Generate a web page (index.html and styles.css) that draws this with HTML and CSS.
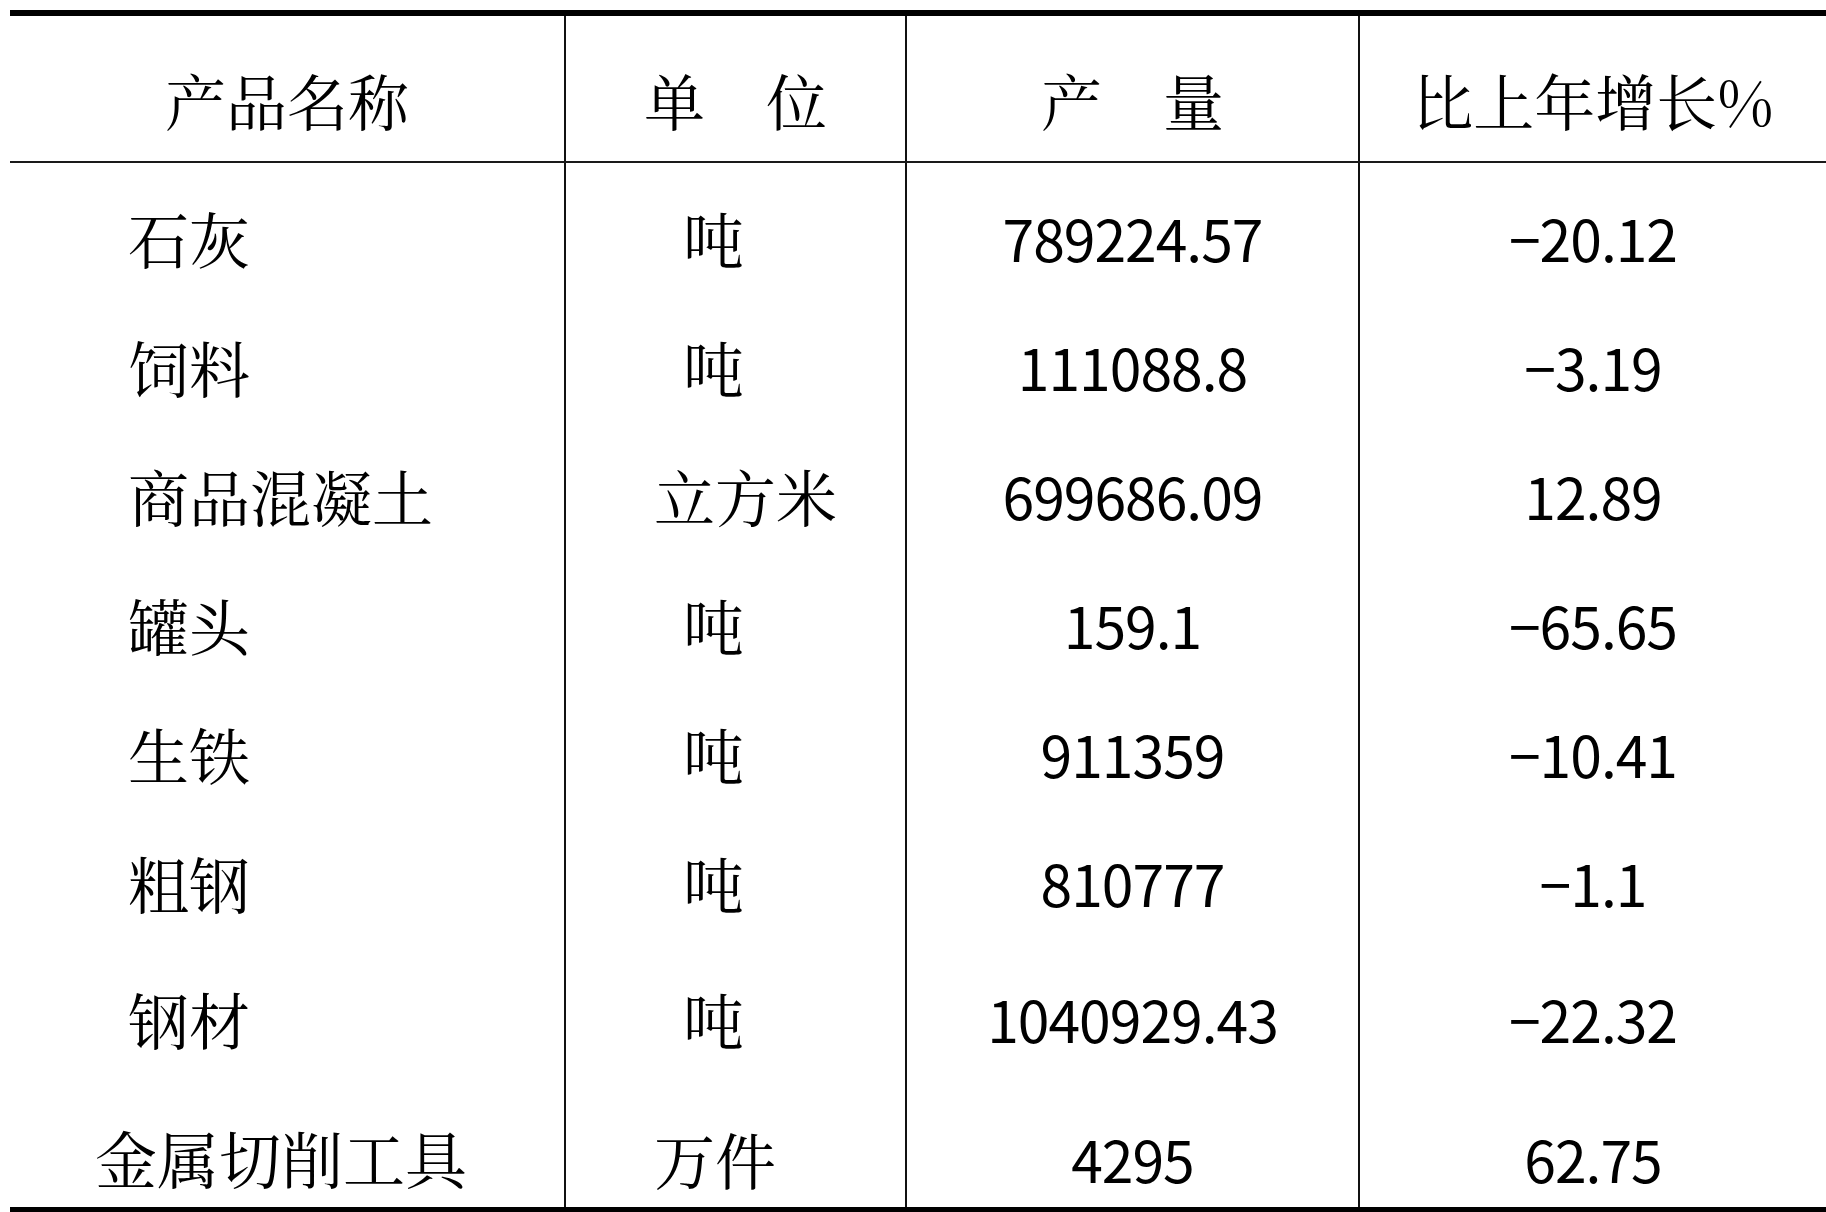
FILE: index.html
```html
<!DOCTYPE html>
<html lang="zh-CN">
<head>
<meta charset="utf-8">
<title>产品产量</title>
<link rel="stylesheet" href="styles.css">
</head>
<body>
<div class="sheet">
  <div class="row head">
    <div class="cell c1">产品名称</div>
    <div class="cell c2">单　位</div>
    <div class="cell c3">产　量</div>
    <div class="cell c4">比上年增长%</div>
  </div>
  <div class="row first">
    <div class="cell c1 left">石灰</div>
    <div class="cell c2 left ton">吨</div>
    <div class="cell c3 num">789224.57</div>
    <div class="cell c4 num">−20.12</div>
  </div>
  <div class="row">
    <div class="cell c1 left">饲料</div>
    <div class="cell c2 left ton">吨</div>
    <div class="cell c3 num">111088.8</div>
    <div class="cell c4 num">−3.19</div>
  </div>
  <div class="row">
    <div class="cell c1 left">商品混凝土</div>
    <div class="cell c2 left">立方米</div>
    <div class="cell c3 num">699686.09</div>
    <div class="cell c4 num">12.89</div>
  </div>
  <div class="row">
    <div class="cell c1 left">罐头</div>
    <div class="cell c2 left ton">吨</div>
    <div class="cell c3 num">159.1</div>
    <div class="cell c4 num">−65.65</div>
  </div>
  <div class="row">
    <div class="cell c1 left">生铁</div>
    <div class="cell c2 left ton">吨</div>
    <div class="cell c3 num">911359</div>
    <div class="cell c4 num">−10.41</div>
  </div>
  <div class="row">
    <div class="cell c1 left">粗钢</div>
    <div class="cell c2 left ton">吨</div>
    <div class="cell c3 num">810777</div>
    <div class="cell c4 num">−1.1</div>
  </div>
  <div class="row tall">
    <div class="cell c1 left">钢材</div>
    <div class="cell c2 left ton">吨</div>
    <div class="cell c3 num">1040929.43</div>
    <div class="cell c4 num">−22.32</div>
  </div>
  <div class="row last">
    <div class="cell c1 wide">金属切削工具</div>
    <div class="cell c2 left">万件</div>
    <div class="cell c3 num">4295</div>
    <div class="cell c4 num">62.75</div>
  </div>
</div>
</body>
</html>
```
FILE: styles.css
```css
html, body {
  margin: 0;
  padding: 0;
  background: #ffffff;
}

body {
  font-family: "AR PL UKai CN", "KaiTi", "STKaiti", "Noto Serif CJK SC", "Noto Sans CJK SC", sans-serif;
  color: #000000;
}

.sheet {
  margin: 10px 0 0 10px;
  width: 1816px;
  border-top: 6px solid #000;
  border-bottom: 6px solid #000;
}

.row {
  display: grid;
  grid-template-columns: 556px 341px 453px 466px;
  height: 129px;
}

.head {
  height: 145px;
  border-bottom: 2px solid #1a1a1a;
}

.head .cell {
  padding-top: 22px;
}

.first {
  height: 139px;
}

.first .cell {
  padding-top: 10px;
}

.tall {
  height: 143px;
}

.last {
  height: 117px;
}

.last .cell {
  padding-top: 19px;
}

.cell {
  display: flex;
  align-items: center;
  justify-content: center;
  font-size: 61px;
  line-height: 1;
  white-space: pre;
  border-right: 2px solid #111;
}

.c4 {
  border-right: none;
}

.left {
  justify-content: flex-start;
}

.c1.left {
  padding-left: 118px;
}

.c1.wide {
  font-size: 62px;
  padding-right: 12px;
}

.c2.left {
  padding-left: 88px;
}

.c2.ton {
  padding-left: 117px;
}

.num {
  font-family: "Noto Sans CJK SC", "Noto Sans", sans-serif;
  font-size: 57px;
  font-weight: 400;
  letter-spacing: -1px;
}
```
